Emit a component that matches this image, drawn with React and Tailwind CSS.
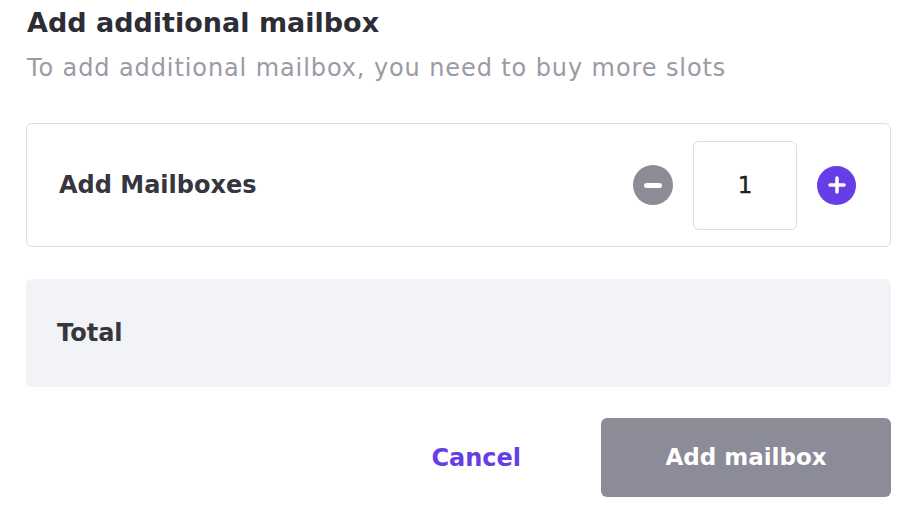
import React from "react";

export default function App() {
  return (
    <div className="w-[909px] h-[512px] bg-white pl-[26px] pr-[18px] font-['DejaVu_Sans',sans-serif] overflow-hidden">
      <div className="pt-[6px]">
        <h1 className="text-[27px] leading-[34px] font-bold text-[#2d2d35] pl-[1px]">
          Add additional mailbox
        </h1>
        <p className="mt-[14px] text-[24px] leading-[28px] tracking-[0.9px] text-[#9a9ba5] pl-[1px]">
          To add additional mailbox, you need to buy more slots
        </p>
      </div>

      <div className="mt-[41px] h-[124px] border border-[#dcdde3] rounded-[6px] flex items-center justify-between pl-[32px] pr-[34px]">
        <span className="text-[24px] font-bold text-[#36363f]">Add Mailboxes</span>
        <div className="flex items-center gap-[20px]">
          <button className="w-[40px] h-[40px] rounded-full bg-[#8c8c97] flex items-center justify-center">
            <span className="block w-[18px] h-[5px] rounded-full bg-white" />
          </button>
          <div className="w-[104px] h-[89px] border border-[#dcdde3] rounded-[6px] flex items-center justify-center text-[23px] text-[#1d1e20] [-webkit-text-stroke:0.4px_#1d1e20]">
            1
          </div>
          <button className="w-[39px] h-[39px] rounded-full bg-[#673de6] flex items-center justify-center">
            <svg width="20" height="20" viewBox="0 0 20 20">
              <path d="M10 3v14M3 10h14" stroke="white" strokeWidth="3.5" strokeLinecap="round" />
            </svg>
          </button>
        </div>
      </div>

      <div className="mt-[32px] h-[108px] bg-[#f2f3f6] rounded-[6px] flex items-center pl-[31px]">
        <span className="text-[24px] font-bold text-[#36363f]">Total</span>
      </div>

      <div className="mt-[31px] flex items-center justify-end">
        <button className="text-[24px] font-bold text-[#673de6] px-[24px] h-[79px] mr-[56px]">
          Cancel
        </button>
        <button className="w-[290px] h-[79px] rounded-[6px] bg-[#8b8c97] text-white text-[23px] font-bold">
          Add mailbox
        </button>
      </div>
    </div>
  );
}
